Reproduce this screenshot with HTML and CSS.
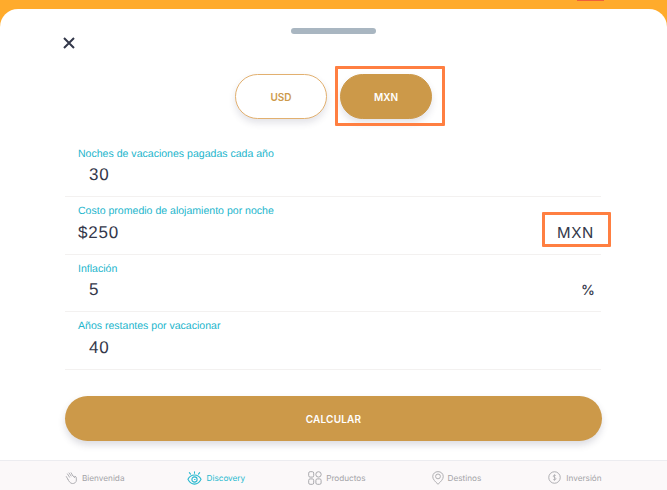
FILE: index.html
```html
<!DOCTYPE html>
<html lang="es">
<head>
    <meta charset="UTF-8">
    <meta name="viewport" content="width=device-width, initial-scale=1.0">
    <title>Calculadora</title>
    <link rel="stylesheet" href="styles.css">
</head>
<body>
    <div class="topBar"><span class="topBadge"></span></div>
    <div class="sheet">
        <div class="handle"></div>
        <button class="closeButton" aria-label="Cerrar">
            <svg width="12" height="12" viewBox="0 0 12 12"><path d="M1 1 L11 11 M11 1 L1 11" stroke="#33384a" stroke-width="2" fill="none"/></svg>
        </button>
        <div class="currencyRow">
            <button class="currency">USD</button>
            <button class="currency currencyOn">MXN</button>
            <span class="marker markerButton"></span>
        </div>
        <div class="fields">
            <div class="field">
                <div class="fieldLabel">Noches de vacaciones pagadas cada año</div>
                <div class="fieldValue indented">30</div>
            </div>
            <div class="field">
                <div class="fieldLabel">Costo promedio de alojamiento por noche</div>
                <div class="fieldValue">$250</div>
                <span class="fieldUnit unitMxn">MXN</span>
                <span class="marker markerUnit"></span>
            </div>
            <div class="field">
                <div class="fieldLabel">Inflación</div>
                <div class="fieldValue indented">5</div>
                <span class="fieldUnit">%</span>
            </div>
            <div class="field">
                <div class="fieldLabel">Años restantes por vacacionar</div>
                <div class="fieldValue indented">40</div>
            </div>
        </div>
        <button class="calcButton">CALCULAR</button>
    </div>
    <nav class="tabBar">
        <a class="tab tabHello">
            <svg width="13" height="14" viewBox="0 0 16 16" fill="none" stroke="#a9a9ad" stroke-width="1.1" stroke-linecap="round" stroke-linejoin="round"><path d="M3.5 9.5 L1.6 6.2 M5.6 7 L3 3 M7.5 5.6 L5 1.8 M9.5 5 L7.5 1.6 M9.5 5 L11.8 7.6 L12.2 5.6 L13.8 7 L14 10.5 C14 13.5 11.5 15 9 14.8 C6.5 14.6 5 12.5 3.5 9.5"/></svg>
            <span>Bienvenida</span>
        </a>
        <a class="tab tabActive">
            <svg width="15" height="14" viewBox="0 0 17 16" fill="none" stroke="#25b8cf" stroke-width="1.2" stroke-linecap="round"><path d="M1 9.5 C3 5.5 5.5 4.5 8.5 4.5 C11.5 4.5 14 5.5 16 9.5 C14 13.5 11.5 15 8.5 15 C5.5 15 3 13.5 1 9.5 Z"/><circle cx="8.5" cy="9.7" r="3"/><path d="M8.5 9.7 h0.6"/><path d="M8.5 0.8 V2.6 M2.6 1.8 L4 3.6 M14.4 1.8 L13 3.6"/></svg>
            <span>Discovery</span>
        </a>
        <a class="tab tabProducts">
            <svg width="14" height="14" viewBox="0 0 14 14" fill="none" stroke="#a9a9ad" stroke-width="1"><rect x="0.7" y="0.7" width="5" height="5.4" rx="1.4"/><circle cx="10.5" cy="3.4" r="2.7"/><rect x="0.7" y="7.9" width="5" height="5.4" rx="1.4"/><rect x="7.9" y="7.9" width="5.2" height="5.4" rx="1.4"/></svg>
            <span>Productos</span>
        </a>
        <a class="tab tabPlaces">
            <svg width="12" height="14" viewBox="0 0 13 15" fill="none" stroke="#a9a9ad" stroke-width="1"><path d="M6.5 14.3 C3.5 11.5 0.8 8.8 0.8 5.9 C0.8 2.8 3.3 0.6 6.5 0.6 C9.7 0.6 12.2 2.8 12.2 5.9 C12.2 8.8 9.5 11.5 6.5 14.3 Z"/><circle cx="6.5" cy="5.8" r="2.6"/></svg>
            <span>Destinos</span>
        </a>
        <a class="tab tabMoney">
            <svg width="13" height="13" viewBox="0 0 14 14" fill="none" stroke="#a9a9ad" stroke-width="1"><circle cx="7" cy="7" r="6.2"/><path d="M8.6 5.2 C8.2 4.3 5.6 4.2 5.6 5.6 C5.6 7 8.6 6.8 8.6 8.4 C8.6 9.8 6 9.8 5.4 8.8 M7 3.6 V10.4" stroke-width="0.8"/></svg>
            <span>Inversión</span>
        </a>
    </nav>
</body>
</html>
```

FILE: styles.css
```css
html, body {
    margin: 0;
    height: 490px;
    overflow: hidden;
}
body {
    display: flex;
    flex-direction: column;
    position: relative;
    background: #ffab2c;
    font-family: "Liberation Sans", sans-serif;
    text-rendering: geometricPrecision;
}
button {
    font-family: inherit;
    border: 0;
    padding: 0;
    background: none;
}
.topBar {
    height: 9px;
    flex: none;
    position: relative;
}
.topBadge {
    position: absolute;
    left: 577px;
    top: 0;
    width: 27px;
    height: 1px;
    background: #f0603a;
}
.sheet {
    flex: none;
    height: 451px;
    box-sizing: border-box;
    position: relative;
    display: flex;
    flex-direction: column;
    align-items: center;
    background: #fff;
    border-radius: 18px 18px 0 0;
    padding-top: 19px;
}
.handle {
    width: 85px;
    height: 6px;
    border-radius: 3px;
    background: #a9b6c1;
}
.closeButton {
    position: absolute;
    left: 63px;
    top: 28px;
    width: 12px;
    height: 12px;
    line-height: 0;
}

.currencyRow {
    position: relative;
    display: flex;
    gap: 13px;
    margin-top: 40px;
}
.currency {
    width: 92px;
    height: 45px;
    box-sizing: border-box;
    border-radius: 23px;
    border: 1px solid #e2b06f;
    background: #fff;
    color: #cd9a4c;
    font-family: Inter, sans-serif;
    font-size: 10px;
    font-weight: 600;
    box-shadow: 0 4px 7px rgba(60, 60, 90, 0.14);
}
.currencyOn {
    border-color: #cc9949;
    background: #cc9949;
    color: #fff;
}
.marker {
    position: absolute;
    box-sizing: border-box;
    border: 3px solid #ff7f41;
    border-radius: 1px;
}
.markerButton {
    left: 100px;
    top: -8px;
    width: 110px;
    height: 60px;
}

.fields {
    width: 536px;
    margin-top: 20.5px;
    margin-left: -1px;
}
.field {
    position: relative;
    box-sizing: border-box;
    height: 57.6px;
    padding: 8px 13px 0;
    border-bottom: 1px solid #f3f1f0;
}
.fieldLabel {
    font-size: 10.55px;
    line-height: 13px;
    color: #22b5cc;
}
.fieldValue {
    margin-top: 3.5px;
    font-size: 17px;
    line-height: 21px;
    letter-spacing: 0.8px;
    color: #34384a;
}
.indented {
    padding-left: 11px;
}
.fieldUnit {
    position: absolute;
    right: 6px;
    top: 25px;
    font-family: Inter, sans-serif;
    font-weight: 500;
    font-size: 14px;
    line-height: 21px;
    color: #34384a;
}
.unitMxn {
    right: 7px;
    font-weight: 400;
    font-size: 15px;
    letter-spacing: 0.6px;
}
.markerUnit {
    right: -10px;
    top: 15px;
    width: 69px;
    height: 35px;
}

.calcButton {
    width: 537px;
    height: 45px;
    margin-top: 26.5px;
    border-radius: 23px;
    background: #cc9949;
    color: #fff;
    font-family: Inter, sans-serif;
    font-size: 10px;
    font-weight: 600;
    letter-spacing: 0.2px;
    box-shadow: 0 4px 7px rgba(60, 60, 90, 0.18);
}

.tabBar {
    flex: none;
    height: 30px;
    box-sizing: border-box;
    display: flex;
    align-items: center;
    padding: 4px 0 0 65px;
    background: #fbf8f9;
    border-top: 1px solid #ececf0;
    font-family: Inter, sans-serif;
    font-size: 8.2px;
    color: #a3a3a7;
}
.tab {
    display: flex;
    align-items: center;
    gap: 4px;
}
.tabActive {
    color: #25b8cf;
    margin-left: 63px;
}
.tabProducts {
    margin-left: 63px;
}
.tabPlaces {
    margin-left: 66px;
}
.tabMoney {
    margin-left: 67px;
    gap: 5px;
}
```
